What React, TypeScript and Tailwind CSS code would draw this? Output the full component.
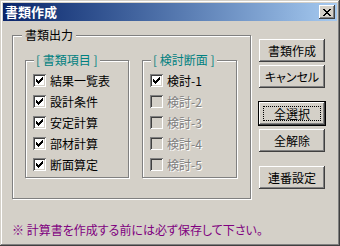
import React from 'react'

const raised =
  'bg-[#d4d0c8] shadow-[inset_-1px_-1px_0_#404040,inset_1px_1px_0_#fff,inset_-2px_-2px_0_#808080,inset_2px_2px_0_#d4d0c8]'

function CheckMark({ color }: { color: string }) {
  return (
    <svg width="7" height="7" viewBox="0 0 7 7" shapeRendering="crispEdges">
      <path d="M6 0h1v3h-1zM5 1h1v3h-1zM4 2h1v3h-1zM3 3h1v3h-1zM2 4h1v3h-1zM1 3h1v3h-1zM0 2h1v3h-1z" fill={color} />
    </svg>
  )
}

function CheckBox({ label, checked, disabled }: { label: string; checked?: boolean; disabled?: boolean }) {
  return (
    <div className="flex h-[21px] items-center">
      <span
        className={`flex h-[13px] w-[13px] shrink-0 items-center justify-center shadow-[inset_1px_1px_0_#808080,inset_-1px_-1px_0_#fff,inset_2px_2px_0_#404040,inset_-2px_-2px_0_#d4d0c8] ${
          disabled ? 'bg-[#d4d0c8]' : 'bg-white'
        }`}
      >
        {checked && <CheckMark color={disabled ? '#808080' : '#000'} />}
      </span>
      <span
        className={`ml-[4px] text-[12px] leading-[16px] ${
          disabled ? 'text-[#808080] [text-shadow:1px_1px_0_#fff]' : 'text-black'
        }`}
      >
        {label}
      </span>
    </div>
  )
}

function Button({ label, isDefault, className }: { label: string; isDefault?: boolean; className?: string }) {
  return (
    <div
      className={`relative flex h-[23px] w-[66px] items-center justify-center text-[12px] leading-[16px] text-black ${raised} ${
        isDefault ? 'outline outline-1 outline-black' : ''
      } ${className ?? ''}`}
    >
      {isDefault && <span className="absolute inset-[4px] border border-dotted border-black" />}
      <span className="relative">{label}</span>
    </div>
  )
}

export default function App() {
  return (
    <div className="h-[246px] w-[340px] overflow-hidden bg-[#d4d0c8] p-[3px] font-['Noto_Sans_CJK_JP',sans-serif] [font-feature-settings:'palt'] shadow-[inset_-1px_-1px_0_#404040,inset_1px_1px_0_#d4d0c8,inset_-2px_-2px_0_#808080,inset_2px_2px_0_#fff]">
      {/* Title bar */}
      <div className="flex h-[18px] items-center justify-between bg-linear-to-r from-[#0a246a] to-[#a6caf0] pl-[2px] pr-[2px]">
        <span className="text-[13px] font-bold leading-[16px] text-white">書類作成</span>
        <div className={`flex h-[14px] w-[16px] items-center justify-center ${raised}`}>
          <svg width="8" height="7" viewBox="0 0 8 7" shapeRendering="crispEdges">
            <path d="M0 0h2v1h-2zM6 0h2v1h-2zM1 1h2v1h-2zM5 1h2v1h-2zM2 2h4v1h-4zM3 3h2v1h-2zM2 4h4v1h-4zM1 5h2v1h-2zM5 5h2v1h-2zM0 6h2v1h-2zM6 6h2v1h-2z" fill="#000" />
          </svg>
        </div>
      </div>

      {/* Body */}
      <div className="flex flex-col pl-[9px]">
        <div className="flex">
          {/* 書類出力 group */}
          <fieldset className="mt-[6px] h-[172px] w-[239px] border border-[#808080] px-[12px] shadow-[inset_1px_1px_0_#fff,1px_1px_0_#fff]">
            <legend className="-ml-[3px] bg-[#d4d0c8] px-[3px] text-[12px] leading-[16px] text-black">書類出力</legend>
            <div className="mt-[9px] flex gap-[13px]">
              <fieldset className="h-[126px] w-[104px] border border-[#808080] px-[7px] shadow-[inset_1px_1px_0_#fff,1px_1px_0_#fff]">
                <legend className="ml-[1px] bg-[#d4d0c8] px-[2px] text-[12px] leading-[16px] text-[#008080]">[ 書類項目 ]</legend>
                <div className="flex flex-col pt-[2px]">
                  <CheckBox label="結果一覧表" checked />
                  <CheckBox label="設計条件" checked />
                  <CheckBox label="安定計算" checked />
                  <CheckBox label="部材計算" checked />
                  <CheckBox label="断面算定" checked />
                </div>
              </fieldset>
              <fieldset className="h-[126px] w-[95px] border border-[#808080] px-[7px] shadow-[inset_1px_1px_0_#fff,1px_1px_0_#fff]">
                <legend className="ml-[1px] bg-[#d4d0c8] px-[2px] text-[12px] leading-[16px] text-[#008080]">[ 検討断面 ]</legend>
                <div className="flex flex-col pt-[2px]">
                  <CheckBox label="検討-1" checked />
                  <CheckBox label="検討-2" disabled />
                  <CheckBox label="検討-3" disabled />
                  <CheckBox label="検討-4" disabled />
                  <CheckBox label="検討-5" disabled />
                </div>
              </fieldset>
            </div>
          </fieldset>

          {/* Buttons */}
          <div className="ml-[8px] mt-[18px] flex flex-col">
            <Button label="書類作成" />
            <Button label="キャンセル" className="mt-[3px]" />
            <Button label="全選択" isDefault className="mt-[14px]" />
            <Button label="全解除" className="mt-[4px]" />
            <Button label="連番設定" className="mt-[14px]" />
          </div>
        </div>

        <p className="mt-[23px] text-[12px] leading-[16px] text-[#800080]">※ 計算書を作成する前には必ず保存して下さい。</p>
      </div>
    </div>
  )
}
